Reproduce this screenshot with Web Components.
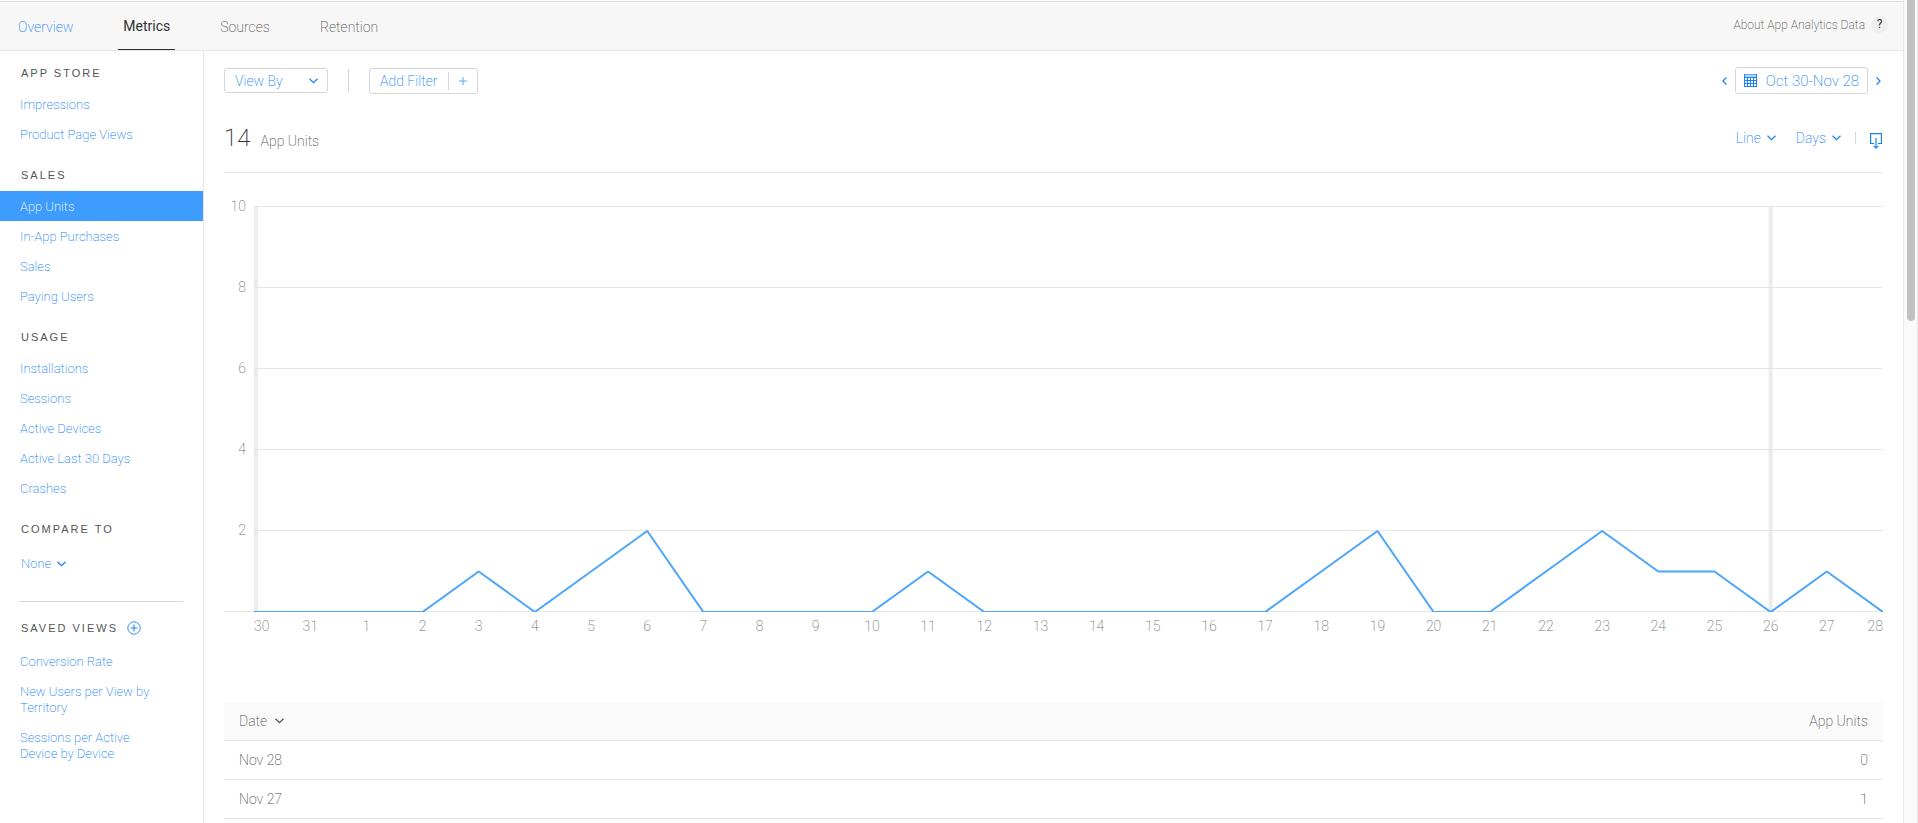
<!DOCTYPE html>
<html lang="en">
<head>
<meta charset="utf-8">
<meta name="viewport" content="width=device-width, initial-scale=1">
<title>App Analytics - Metrics</title>
<style>
  :root {
    --blue: #3d9cfd;
    --link: #1a84f5;
    --text: #555;
    --line: #e6e6e6;
    --border: #d6d6d6;
  }

  body {
    margin: 0;
    background: #fff;
    color: var(--text);
    font-family: Roboto, "Liberation Sans", sans-serif;
    font-weight: 200;
    font-size: 14px;
    line-height: 16px;
  }
</style>
</head>
<body>
<analytics-app></analytics-app>

<script>
const chevron = /* html */`<svg width="9" height="6" viewBox="0 0 9 6" fill="none" stroke="currentColor" stroke-width="1.3" aria-hidden="true"><path d="M.5 .8 L4.5 4.6 L8.5 .8"/></svg>`;

class AnalyticsApp extends HTMLElement {
  constructor() {
    super();
    this.attachShadow({ mode: "open" });
  }

  static get styles() {
    return /* css */`
      :host {
        display: grid;
        grid-template-columns: 1fr 15px;
        min-height: 100vh;
      }

      .page {
        display: flex;
        flex-direction: column;
      }

      .body {
        flex: 1;
        display: grid;
        grid-template-columns: 204px 1fr;
      }

      main {
        min-width: 0;
        padding: 16px 20px 0;
      }
    `;
  }

  connectedCallback() {
    this.shadowRoot.innerHTML = /* html */`
    <style>${AnalyticsApp.styles}</style>
    <div class="page">
      <nav-bar></nav-bar>
      <div class="body">
        <side-bar></side-bar>
        <main>
          <filter-bar></filter-bar>
          <metric-title value="14" label="App Units"></metric-title>
          <line-chart></line-chart>
          <data-table></data-table>
        </main>
      </div>
    </div>
    <scroll-track></scroll-track>`;
  }
}

class NavBar extends HTMLElement {
  constructor() {
    super();
    this.attachShadow({ mode: "open" });
  }

  static get styles() {
    return /* css */`
      :host {
        display: flex;
        justify-content: space-between;
        align-items: flex-start;
        height: 48px;
        margin-top: 1px;
        padding: 0 15px 0 13px;
        background: #f7f7f7;
        border-top: 1px solid #dcdcdc;
        border-bottom: 1px solid var(--line);
      }

      nav {
        display: flex;
        gap: 40px;
      }

      a {
        color: inherit;
        text-decoration: none;
      }

      nav a {
        height: 47px;
        padding: 0 5px;
        line-height: 50px;
      }

      nav a.link {
        color: var(--link);
      }

      nav a.current {
        border-bottom: 1px solid #333;
        color: #333;
        font-weight: 400;
        line-height: 48px;
      }

      .about {
        display: flex;
        align-items: center;
        gap: 6px;
        height: 45px;
        font-size: 12px;
      }

      button {
        width: 17px;
        height: 17px;
        padding: 0;
        border: 0;
        border-radius: 50%;
        background: #eee;
        color: #333;
        font: 400 12px/17px Roboto, sans-serif;
      }
    `;
  }

  connectedCallback() {
    this.shadowRoot.innerHTML = /* html */`
    <style>${NavBar.styles}</style>
    <nav>
      <a class="link" href="#overview">Overview</a>
      <a class="current" href="#metrics" aria-current="page">Metrics</a>
      <a href="#sources">Sources</a>
      <a href="#retention">Retention</a>
    </nav>
    <div class="about">
      <a href="#about">About App Analytics Data</a>
      <button type="button" aria-label="Help">?</button>
    </div>`;
  }
}

class DropDown extends HTMLElement {
  constructor() {
    super();
    this.attachShadow({ mode: "open" });
  }

  static get styles() {
    return /* css */`
      :host {
        display: inline-grid;
        align-items: center;
        color: var(--link);
      }

      select, svg {
        grid-area: 1 / 1;
      }

      select {
        appearance: none;
        field-sizing: content;
        margin: 0;
        padding: 0 15px 0 0;
        border: 0;
        background: none;
        color: inherit;
        font: inherit;
        line-height: 18px;
      }

      svg {
        justify-self: end;
        pointer-events: none;
      }

      :host([boxed]) {
        width: 102px;
        height: 23px;
        border: 1px solid var(--border);
        border-radius: 3px;
      }

      :host([boxed]) select {
        padding-left: 10px;
      }

      :host([boxed]) svg {
        margin-right: 9px;
      }
    `;
  }

  connectedCallback() {
    this.shadowRoot.innerHTML = /* html */`
    <style>${DropDown.styles}</style>
    <select aria-label="${this.getAttribute("label")}"><option>${this.getAttribute("value")}</option></select>
    ${chevron}`;
  }
}

class SideSection extends HTMLElement {
  constructor() {
    super();
    this.attachShadow({ mode: "open" });
  }

  static get styles() {
    return /* css */`
      :host {
        display: block;
      }

      header {
        display: flex;
        align-items: center;
        gap: 9px;
        padding: 0 21px 8px;
      }

      h2 {
        margin: 0;
        color: #555;
        font: 400 11px/16px "Liberation Sans", sans-serif;
        letter-spacing: 2px;
      }
    `;
  }

  connectedCallback() {
    this.shadowRoot.innerHTML = /* html */`
    <style>${SideSection.styles}</style>
    <header><h2>${this.getAttribute("heading")}</h2><slot name="action"></slot></header>
    <slot></slot>`;
  }
}

class SideBar extends HTMLElement {
  constructor() {
    super();
    this.attachShadow({ mode: "open" });
  }

  static get styles() {
    return /* css */`
      :host {
        display: flex;
        flex-direction: column;
        gap: 18px;
        padding-top: 14px;
        border-right: 1px solid var(--line);
        font-size: 13px;
      }

      a {
        display: block;
        padding: 8px 48px 6px 20px;
        color: var(--link);
        text-decoration: none;
      }

      a.active {
        background: var(--blue);
        color: #fff;
      }

      drop-down {
        margin: 10px 21px;
      }

      hr {
        width: 164px;
        margin: 0 19px;
        border: 0;
        border-top: 1px solid var(--border);
      }

      button {
        display: flex;
        padding: 0;
        border: 0;
        background: none;
        color: var(--link);
      }

      .saved {
        padding-top: 2px;
      }
    `;
  }

  links(names) {
    return names.map(name => `<a href="#"${name === "App Units" ? ' class="active"' : ""}>${name}</a>`).join("");
  }

  connectedCallback() {
    this.shadowRoot.innerHTML = /* html */`
    <style>${SideBar.styles}</style>
    <side-section heading="APP STORE">${this.links(["Impressions", "Product Page Views"])}</side-section>
    <side-section heading="SALES">${this.links(["App Units", "In-App Purchases", "Sales", "Paying Users"])}</side-section>
    <side-section heading="USAGE">${this.links(["Installations", "Sessions", "Active Devices", "Active Last 30 Days", "Crashes"])}</side-section>
    <side-section heading="COMPARE TO"><drop-down label="Compare to" value="None"></drop-down></side-section>
    <hr>
    <side-section heading="SAVED VIEWS">
      <button slot="action" type="button" aria-label="Save this view">
        <svg width="14" height="14" viewBox="0 0 14 14" fill="none" stroke="currentColor"><circle cx="7" cy="7" r="6.2" stroke-width=".9"/><path d="M7 3.5v7M3.5 7h7" stroke-width="1.1"/></svg>
      </button>
      <div class="saved">${this.links(["Conversion Rate", "New Users per View by Territory", "Sessions per Active Device by Device"])}</div>
    </side-section>`;
  }
}

class FilterBar extends HTMLElement {
  constructor() {
    super();
    this.attachShadow({ mode: "open" });
  }

  static get styles() {
    return /* css */`
      :host {
        display: flex;
        justify-content: space-between;
        color: var(--link);
      }

      div {
        display: flex;
        align-items: center;
      }

      button {
        display: flex;
        align-items: center;
        padding: 0;
        border: 0;
        background: none;
        color: inherit;
        font: inherit;
      }

      .filters {
        gap: 20px;
      }

      .rule {
        width: 1px;
        height: 23px;
        background: var(--border);
      }

      .add, .range {
        box-sizing: border-box;
        border: 1px solid var(--border);
        border-radius: 3px;
      }

      .add {
        gap: 10px;
        height: 26px;
        padding: 0 10px;
      }

      .add .rule {
        height: 18px;
      }

      .dates {
        gap: 8px;
        margin-right: 2px;
      }

      .range {
        gap: 9px;
        height: 27px;
        padding: 0 8px;
        font-size: 15px;
      }
    `;
  }

  connectedCallback() {
    this.shadowRoot.innerHTML = /* html */`
    <style>${FilterBar.styles}</style>
    <div class="filters">
      <drop-down boxed label="View by" value="View By"></drop-down>
      <span class="rule"></span>
      <button class="add" type="button">
        Add Filter
        <span class="rule"></span>
        <svg width="8" height="8" viewBox="0 0 8 8" fill="none" stroke="currentColor" opacity=".7" aria-hidden="true"><path d="M4 0v8M0 4h8"/></svg>
      </button>
    </div>
    <div class="dates">
      <button type="button" aria-label="Previous period">
        <svg width="5" height="8" viewBox="0 0 5 8" fill="none" stroke="currentColor" stroke-width="1.3"><path d="M4.4 .4L1 4l3.4 3.6"/></svg>
      </button>
      <button class="range" type="button">
        <svg width="13" height="13" viewBox="0 0 13 13" fill="none" stroke="currentColor" aria-hidden="true">
          <path d="M0 .5h13" opacity=".7"/>
          <path d="M0 2h13" stroke-width="2" opacity=".35"/>
          <path d="M.5 0v13M12.5 0v13M0 12.5h13M0 3.5h13M0 6.5h13M0 9.5h13M3.5 3v10M6.5 3v10M9.5 3v10"/>
        </svg>
        Oct 30-Nov 28
      </button>
      <button type="button" aria-label="Next period">
        <svg width="5" height="8" viewBox="0 0 5 8" fill="none" stroke="currentColor" stroke-width="1.3"><path d="M.6 .4L4 4L.6 7.6"/></svg>
      </button>
    </div>`;
  }
}

class MetricTitle extends HTMLElement {
  constructor() {
    super();
    this.attachShadow({ mode: "open" });
  }

  static get styles() {
    return /* css */`
      :host {
        display: flex;
        justify-content: space-between;
        align-items: flex-start;
        height: 50px;
        margin-top: 28px;
        border-bottom: 1px solid var(--line);
      }

      h1 {
        display: flex;
        align-items: baseline;
        gap: 10px;
        margin: 0;
        font: inherit;
        line-height: 32px;
      }

      strong {
        color: #333;
        font-size: 24px;
        font-weight: 200;
      }

      .tools {
        display: flex;
        align-items: center;
        gap: 14px;
        height: 32px;
        margin-right: 1px;
        color: var(--link);
      }

      drop-down + drop-down {
        margin-left: 6px;
      }

      .export {
        display: flex;
        padding: 0 0 0 14px;
        border: 0;
        border-left: 1px solid var(--border);
        background: none;
        color: inherit;
      }

      .export svg {
        overflow: visible;
      }
    `;
  }

  connectedCallback() {
    this.shadowRoot.innerHTML = /* html */`
    <style>${MetricTitle.styles}</style>
    <h1><strong>${this.getAttribute("value")}</strong> ${this.getAttribute("label")}</h1>
    <div class="tools">
      <drop-down label="Chart type" value="Line"></drop-down>
      <drop-down label="Interval" value="Days"></drop-down>
      <button class="export" type="button" aria-label="Export">
        <svg width="12" height="12" viewBox="0 0 12 12" fill="none" stroke="currentColor" stroke-width="1.2"><path d="M4 11.5H.6V1.6h10.8v9.9H8M6 6v10M3.6 13.8L6 16.2l2.4-2.4"/></svg>
      </button>
    </div>`;
  }
}

class LineChart extends HTMLElement {
  constructor() {
    super();
    this.attachShadow({ mode: "open" });
    this.days = [30, 31, ...Array.from({ length: 28 }, (_, i) => i + 1)];
    this.units = [0, 0, 0, 0, 1, 0, 1, 2, 0, 0, 0, 0, 1, 0, 0, 0, 0, 0, 0, 1, 2, 0, 0, 1, 2, 1, 1, 0, 1, 0];
  }

  static get styles() {
    return /* css */`
      :host {
        display: grid;
        grid-template-columns: 30px 1fr;
        margin-top: 33px;
        color: #777;
      }

      .scale {
        display: flex;
        flex-direction: column;
        justify-content: space-between;
        align-items: flex-end;
        padding-right: 8px;
        border-bottom: 1px solid var(--line);
      }

      .scale span {
        display: flex;
        align-items: center;
        height: 0;
      }

      svg {
        display: block;
        width: 100%;
        height: 406px;
      }

      .grid {
        fill: var(--line);
      }

      .marker {
        stroke: #ebebeb;
      }

      .series {
        fill: none;
        stroke: #4aa5fb;
        stroke-width: 2;
        stroke-linejoin: bevel;
      }

      line, polyline {
        vector-effect: non-scaling-stroke;
      }

      .days {
        grid-column: 2;
        display: flex;
        justify-content: space-between;
        padding-top: 6px;
      }

      .days span {
        display: flex;
        justify-content: center;
        width: 0;
      }

      .days span:first-child {
        justify-content: flex-start;
      }

      .days span:last-child {
        justify-content: flex-end;
      }
    `;
  }

  connectedCallback() {
    // x runs over the day index, y stays in pixels: 81 for every two units
    const rows = [0, 81, 162, 243, 324, 405];
    const points = this.units.map((value, i) => `${i},${406 - value * 40.5}`).join(" ");

    this.shadowRoot.innerHTML = /* html */`
    <style>${LineChart.styles}</style>
    <div class="scale">${[10, 8, 6, 4, 2, ""].map(n => `<span>${n}</span>`).join("")}</div>
    <svg viewBox="0 0 29 406" preserveAspectRatio="none" role="img" aria-label="App Units by day">
      <line class="marker" x1="0" x2="0" y1="0" y2="406" stroke-width="8"/>
      <line class="marker" x1="27" x2="27" y1="0" y2="406" stroke-width="4"/>
      ${rows.map(y => `<rect class="grid" x="0" y="${y}" width="29" height="1"/>`).join("")}
      <polyline class="series" points="${points}"/>
    </svg>
    <div class="days">${this.days.map(day => `<span>${day}</span>`).join("")}</div>`;
  }
}

class DataTable extends HTMLElement {
  constructor() {
    super();
    this.attachShadow({ mode: "open" });
    this.rows = [["Nov 28", 0], ["Nov 27", 1]];
  }

  static get styles() {
    return /* css */`
      :host {
        display: block;
        margin-top: 68px;
      }

      table {
        width: 100%;
        border-collapse: separate;
        border-spacing: 0;
      }

      th, td {
        height: 38px;
        padding: 0 15px;
        border-bottom: 1px solid var(--line);
        font-weight: inherit;
        text-align: left;
      }

      th {
        background: #fafafa;
      }

      th:last-child, td:last-child {
        text-align: right;
      }

      button {
        display: flex;
        align-items: center;
        gap: 8px;
        padding: 0;
        border: 0;
        background: none;
        color: inherit;
        font: inherit;
      }
    `;
  }

  connectedCallback() {
    this.shadowRoot.innerHTML = /* html */`
    <style>${DataTable.styles}</style>
    <table>
      <thead>
        <tr><th scope="col"><button type="button">Date ${chevron}</button></th><th scope="col">App Units</th></tr>
      </thead>
      <tbody>
        ${this.rows.map(([date, units]) => `<tr><td>${date}</td><td>${units}</td></tr>`).join("")}
      </tbody>
    </table>`;
  }
}

class ScrollTrack extends HTMLElement {
  constructor() {
    super();
    this.attachShadow({ mode: "open" });
  }

  connectedCallback() {
    this.shadowRoot.innerHTML = /* html */`
    <style>
      :host {
        display: flex;
        justify-content: center;
        background: #fafafa;
        border: solid #e8e8e8;
        border-width: 0 1px;
      }

      div {
        width: 8px;
        height: 39vh;
        border-radius: 0 0 4px 4px;
        background: #c1c1c1;
      }
    </style>
    <div></div>`;
  }
}

customElements.define("drop-down", DropDown);
customElements.define("side-section", SideSection);
customElements.define("nav-bar", NavBar);
customElements.define("side-bar", SideBar);
customElements.define("filter-bar", FilterBar);
customElements.define("metric-title", MetricTitle);
customElements.define("line-chart", LineChart);
customElements.define("data-table", DataTable);
customElements.define("scroll-track", ScrollTrack);
customElements.define("analytics-app", AnalyticsApp);
</script>
</body>
</html>
